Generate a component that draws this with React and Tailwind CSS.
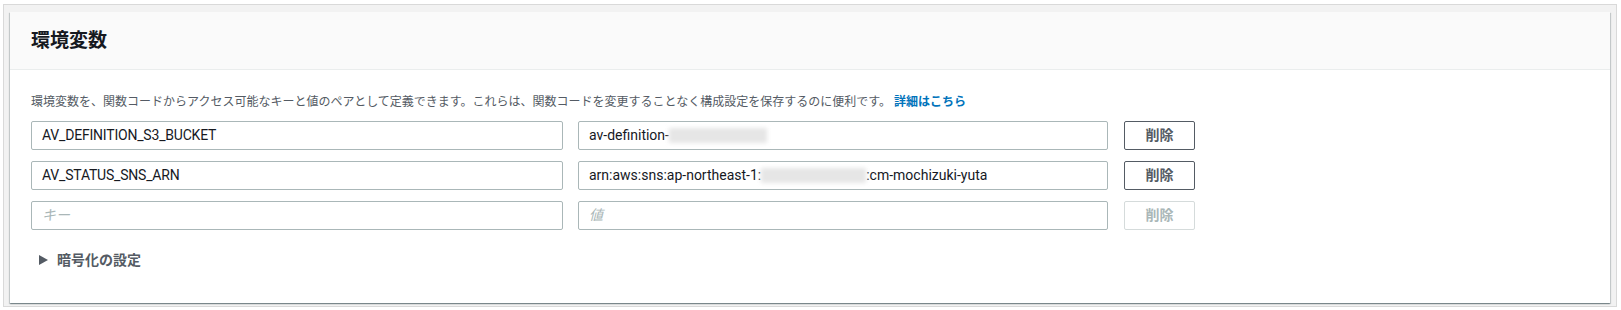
import React from 'react';

const font = { fontFamily: 'Roboto, "Noto Sans CJK JP", sans-serif' };

const rows = [
  { key: 'AV_DEFINITION_S3_BUCKET', value: ['av-definition-', 98, ''] },
  { key: 'AV_STATUS_SNS_ARN', value: ['arn:aws:sns:ap-northeast-1:', 105, ':cm-mochizuki-yuta'] },
];

// blurred (masked) part of a value
const Masked = ({ width }) => (
  <span
    className="inline-block h-[15px] bg-[#e6e6e6] blur-[2px] align-middle"
    style={{ width }}
  />
);

const RemoveButton = ({ disabled }) => (
  <button
    className={`w-[71px] h-[29px] rounded-[2px] border bg-white text-[14px] font-bold ${
      disabled ? 'border-[#d5dbdb] text-[#aab7b8]' : 'border-[#545b64] text-[#545b64]'
    }`}
  >
    削除
  </button>
);

export default function App() {
  return (
    <div className="w-[1621px] h-[310px] bg-white pt-[4px] pl-[3px]" style={font}>
      <div className="w-[1614px] h-[303px] border border-[#d9d9d9] bg-[#f2f2f2] px-[6px] pt-[7px]">
        <div className="h-[291px] bg-white shadow-[0_1px_1px_0_rgba(0,28,36,0.3),1px_1px_1px_0_rgba(0,28,36,0.15),-1px_1px_1px_0_rgba(0,28,36,0.15)]">
          {/* header */}
          <div className="h-[58px] bg-[#fafafa] border-b border-[#eaeded] px-[21px] flex items-center">
            <h2 className="text-[19px] font-bold text-[#16191f] leading-none">環境変数</h2>
          </div>

          {/* body */}
          <div className="px-[21px] pt-[23px]">
            <p className="text-[12px] leading-[18px] text-[#545b64]">
              環境変数を、関数コードからアクセス可能なキーと値のペアとして定義できます。これらは、関数コードを変更することなく構成設定を保存するのに便利です。
              <a className="font-bold text-[#0073bb] ml-[3px]">詳細はこちら</a>
            </p>

            <div className="mt-[10px] flex flex-col gap-[11px]">
              {rows.map((r) => (
                <div key={r.key} className="flex items-center">
                  <div className="w-[532px] h-[29px] rounded-[2px] border border-[#aab7b8] pl-[10px] flex items-center text-[14px] text-[#16191f] tracking-[-0.2px]">
                    {r.key}
                  </div>
                  <div className="ml-[15px] w-[530px] h-[29px] rounded-[2px] border border-[#aab7b8] pl-[10px] flex items-center text-[14px] text-[#16191f] whitespace-pre">
                    <span>{r.value[0]}</span>
                    <Masked width={r.value[1]} />
                    <span>{r.value[2]}</span>
                  </div>
                  <div className="ml-[16px]">
                    <RemoveButton />
                  </div>
                </div>
              ))}
              <div className="flex items-center">
                <div className="w-[532px] h-[29px] rounded-[2px] border border-[#aab7b8] pl-[10px] flex items-center text-[14px] italic text-[#aab7b8]">
                  キー
                </div>
                <div className="ml-[15px] w-[530px] h-[29px] rounded-[2px] border border-[#aab7b8] pl-[10px] flex items-center text-[14px] italic text-[#aab7b8]">
                  値
                </div>
                <div className="ml-[16px]">
                  <RemoveButton disabled />
                </div>
              </div>
            </div>

            <div className="mt-[20px] h-[20px] flex items-center pl-[8px] text-[14px] font-bold text-[#545b64]">
              <svg width="9" height="10" viewBox="0 0 9 10" className="mr-[9px]">
                <polygon points="0,0 9,5 0,10" fill="#545b64" />
              </svg>
              暗号化の設定
            </div>
          </div>
        </div>
      </div>
    </div>
  );
}
